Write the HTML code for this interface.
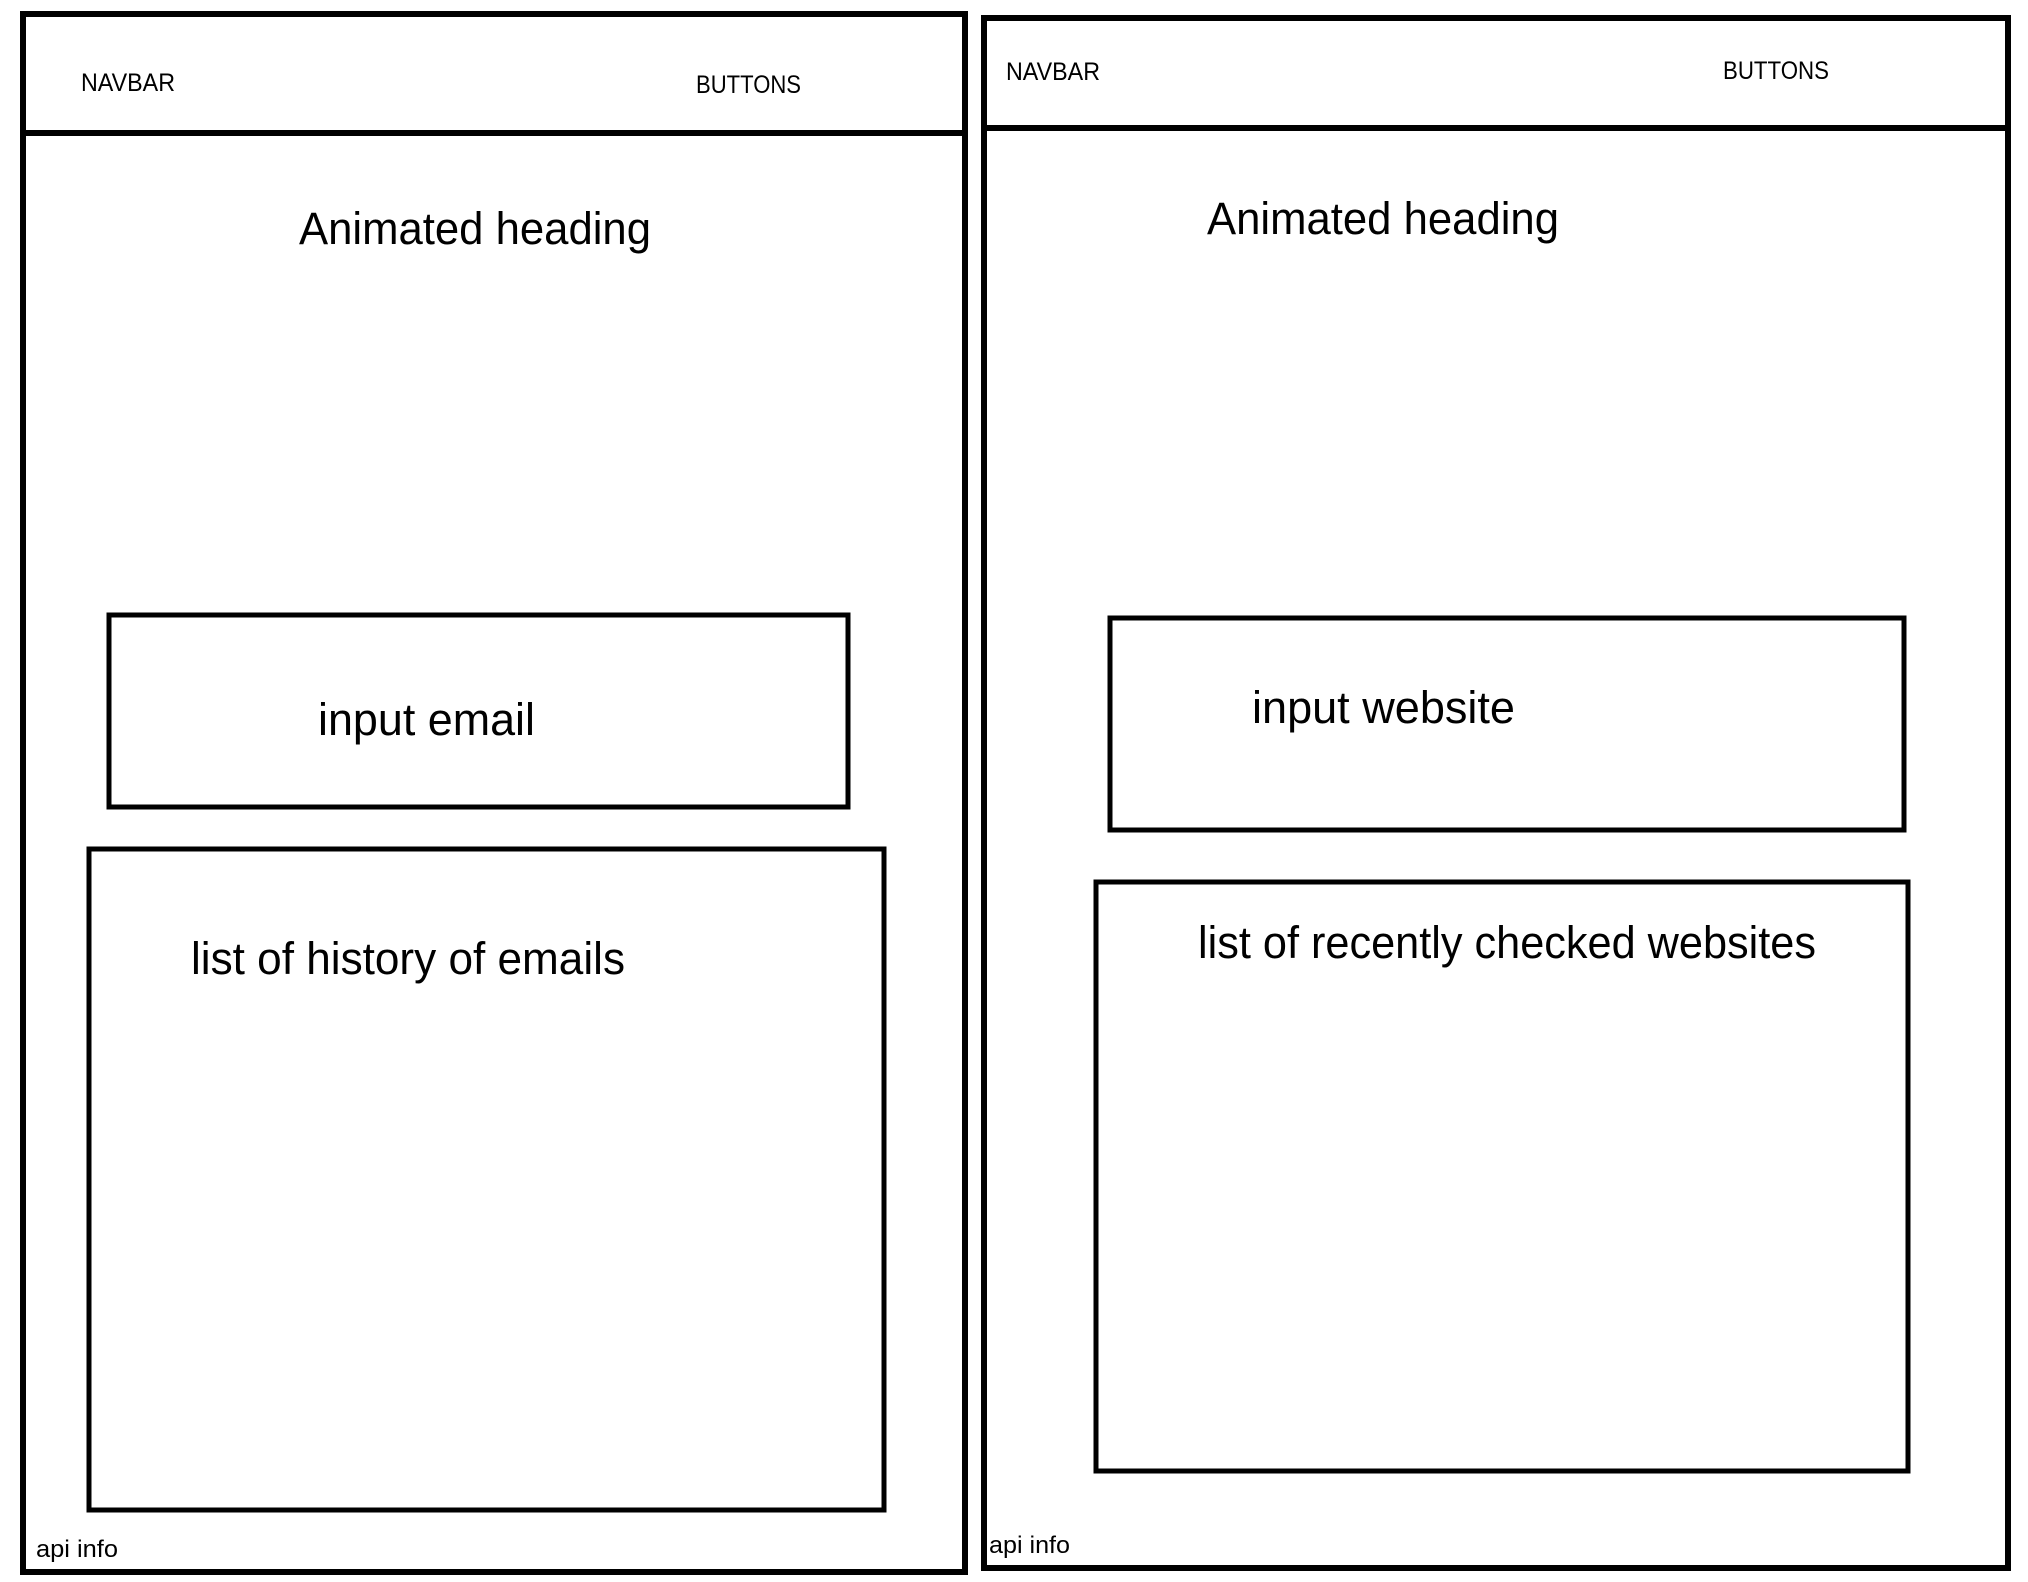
<!DOCTYPE html>
<html><head><meta charset="utf-8"><style>html,body{margin:0;padding:0;background:#fff}svg{display:block}</style></head>
<body>
<svg width="2028" height="1582" viewBox="0 0 2028 1582" xmlns="http://www.w3.org/2000/svg" font-family="Liberation Sans, sans-serif" fill="#000">
<rect width="2028" height="1582" fill="#fff"/>
<g fill="none" stroke="#000" stroke-width="6">
<rect x="23" y="14" width="942" height="1558"/>
<line x1="23" y1="133" x2="965" y2="133"/>
<rect x="984" y="18" width="1024" height="1550"/>
<line x1="984" y1="128" x2="2008" y2="128"/>
</g>
<g fill="none" stroke="#000" stroke-width="5">
<rect x="109" y="615" width="739" height="192"/>
<rect x="89" y="849" width="795" height="661"/>
<rect x="1110" y="618" width="794" height="212"/>
<rect x="1096" y="882" width="812" height="589"/>
</g>
<g font-size="25">
<text x="81" y="91" textLength="94" lengthAdjust="spacingAndGlyphs">NAVBAR</text>
<text x="696" y="93" textLength="105" lengthAdjust="spacingAndGlyphs">BUTTONS</text>
<text x="1006" y="80" textLength="94" lengthAdjust="spacingAndGlyphs">NAVBAR</text>
<text x="1723" y="79" textLength="106" lengthAdjust="spacingAndGlyphs">BUTTONS</text>
</g>
<g font-size="24">
<text x="36" y="1557" textLength="82" lengthAdjust="spacingAndGlyphs">api info</text>
<text x="989" y="1553" textLength="81" lengthAdjust="spacingAndGlyphs">api info</text>
</g>
<g font-size="45">
<text x="299" y="244" textLength="352" lengthAdjust="spacingAndGlyphs">Animated heading</text>
<text x="1207" y="234" textLength="352" lengthAdjust="spacingAndGlyphs">Animated heading</text>
<text x="318" y="735" textLength="217" lengthAdjust="spacingAndGlyphs">input email</text>
<text x="191" y="974" textLength="434" lengthAdjust="spacingAndGlyphs">list of history of emails</text>
<text x="1252" y="723" textLength="263" lengthAdjust="spacingAndGlyphs">input website</text>
<text x="1198" y="958" textLength="618" lengthAdjust="spacingAndGlyphs">list of recently checked websites</text>
</g>
</svg>
</body></html>
